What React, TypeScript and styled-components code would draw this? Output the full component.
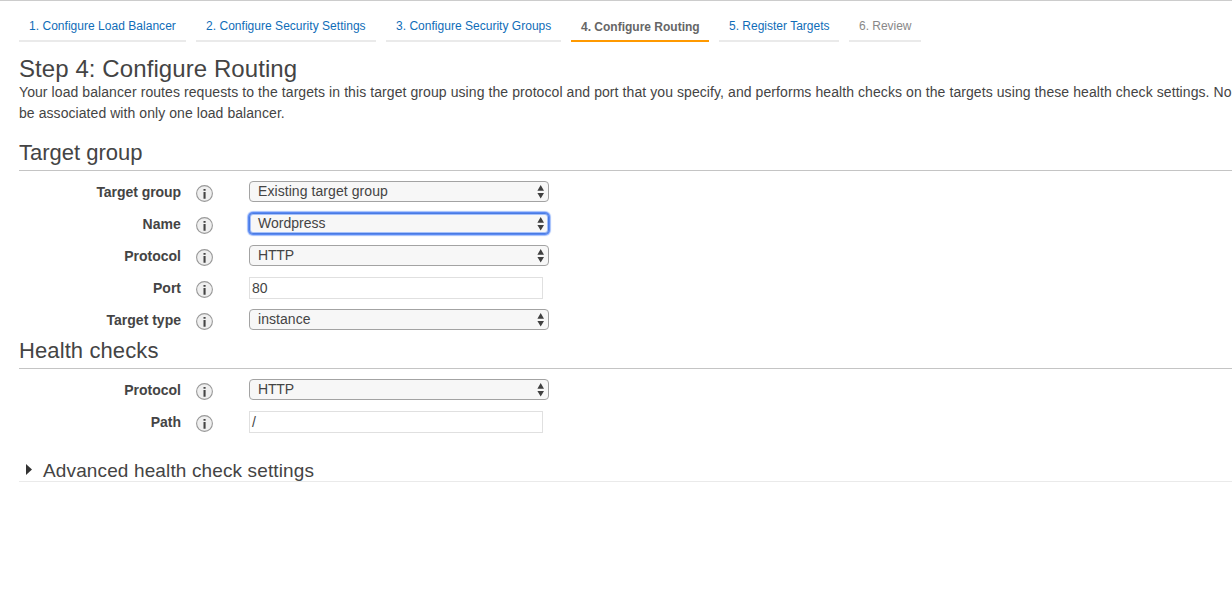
import React from 'react';
import styled, { createGlobalStyle } from 'styled-components';

const GlobalStyle = createGlobalStyle`
  * { box-sizing: border-box; }
  html, body { margin: 0; background: #fff; overflow: hidden; }
  body { font-family: "Liberation Sans", Helvetica, Arial, sans-serif; color: #444; }
`;

const Page = styled.main`
  height: 606px;
  border-top: 1px solid #ccc;
  padding-left: 19px;
  overflow: hidden;
  white-space: nowrap;
`;

const Tabs = styled.nav`
  display: flex;
  gap: 10px;
  height: 41px;
`;

type TabState = 'link' | 'active' | 'pending';
const tabColors = { link: '#0f6db8', active: '#666', pending: '#888' };

const Tab = styled.div<{ $state: TabState; $width: number; $spacing: number }>`
  width: ${(p) => p.$width}px;
  padding: ${(p) => (p.$state === 'active' ? 18 : 17)}px 0 0 10px;
  border-bottom: 2px solid ${(p) => (p.$state === 'active' ? '#f90' : '#eaeaea')};
  color: ${(p) => tabColors[p.$state]};
  font-size: 12px;
  line-height: 16px;
  font-weight: ${(p) => (p.$state === 'active' ? 700 : 400)};
  letter-spacing: ${(p) => p.$spacing}px;
`;

const Title = styled.h1`
  margin: 12px 0 0;
  font-size: 24px;
  line-height: 30px;
  font-weight: 400;
  letter-spacing: 0.08px;
`;

const Intro = styled.p`
  margin: -2px 0 0;
  font-size: 14px;
  line-height: 21px;
`;

const IntroLine = styled.span<{ $spacing: number }>`
  display: block;
  letter-spacing: ${(p) => p.$spacing}px;
`;

const SectionTitle = styled.h2<{ $top: number; $spacing: number }>`
  margin: ${(p) => p.$top}px 0 10px;
  height: 34px;
  border-bottom: 1px solid #c4c4c4;
  font-size: 22px;
  line-height: 32px;
  font-weight: 400;
  letter-spacing: ${(p) => p.$spacing}px;
`;

const Row = styled.div`
  display: grid;
  grid-template-columns: 162px 17px 1fr;
  column-gap: 15px;
  height: 32px;
  align-items: start;
`;

const Label = styled.label<{ $spacing?: number }>`
  padding-top: 2px;
  text-align: right;
  font-size: 14px;
  line-height: 18px;
  font-weight: 700;
  letter-spacing: ${(p) => p.$spacing ?? 0}px;
`;

const InfoSvg = styled.svg`
  display: block;
  margin-top: 4px;
`;

const SelectBox = styled.div<{ $focused?: boolean }>`
  display: flex;
  justify-content: space-between;
  width: 300px;
  height: 21px;
  margin-left: 21px;
  padding: 0 3px 0 8px;
  border: 1px solid ${(p) => (p.$focused ? '#4a7be0' : '#a3a3a3')};
  border-radius: 4px;
  background: #f7f7f7;
  box-shadow: ${(p) => (p.$focused ? '0 0 0 1px #5b8af5, 0 0 1px 2px #a5c0fb, inset 0 0 0 1px #a5c0fb' : 'none')};
  font-size: 14px;
  line-height: 19px;
`;

const TextBox = styled.div`
  width: 294px;
  height: 22px;
  margin-left: 21px;
  padding: 0 2px;
  border: 1px solid #e0e0e0;
  font-size: 14px;
  line-height: 21px;
`;

const Arrows = styled.svg`
  display: block;
  margin-top: 3px;
`;

const Value = styled.span<{ $spacing?: number }>`
  letter-spacing: ${(p) => p.$spacing ?? 0}px;
`;

const Advanced = styled.div`
  display: flex;
  gap: 10px;
  height: 25px;
  margin-top: 14px;
  padding-left: 7px;
  border-bottom: 1px solid #eaeaea;
  font-size: 19px;
  line-height: 27px;
  letter-spacing: 0.13px;
`;

const Caret = styled.svg`
  display: block;
  margin-top: 7px;
`;

const Info = () => (
  <InfoSvg width="17" height="17" viewBox="0 0 17 17">
    <circle cx="8.5" cy="8.5" r="7.9" fill="#efefef" stroke="#999" strokeWidth="1.1" />
    <path d="M7.5 4h2.1v1.8H7.5zM7.5 6.9h2.1v6.8H7.5z" fill="#444" />
  </InfoSvg>
);

interface FieldProps {
  label: string;
  value: string;
  kind?: 'select' | 'text';
  focused?: boolean;
  labelSpacing?: number;
  valueSpacing?: number;
}

const Field = ({ label, value, kind = 'select', focused, labelSpacing, valueSpacing }: FieldProps) => (
  <Row>
    <Label $spacing={labelSpacing}>{label}</Label>
    <Info />
    {kind === 'select' ? (
      <SelectBox $focused={focused}>
        <Value $spacing={valueSpacing}>{value}</Value>
        <Arrows width="8" height="14" viewBox="0 0 8 14">
          <path d="M3.7 0 7 5.8H0.4z M0.4 7.9H7L3.7 13.6z" fill="#404040" />
        </Arrows>
      </SelectBox>
    ) : (
      <TextBox>{value}</TextBox>
    )}
  </Row>
);

const tabs: { text: string; state: TabState; width: number; spacing: number }[] = [
  { text: '1. Configure Load Balancer', state: 'link', width: 167, spacing: 0.03 },
  { text: '2. Configure Security Settings', state: 'link', width: 180, spacing: 0.03 },
  { text: '3. Configure Security Groups', state: 'link', width: 175, spacing: 0.02 },
  { text: '4. Configure Routing', state: 'active', width: 138, spacing: 0 },
  { text: '5. Register Targets', state: 'link', width: 120, spacing: 0 },
  { text: '6. Review', state: 'pending', width: 72, spacing: -0.03 },
];

export default function App() {
  return (
    <>
      <GlobalStyle />
      <Page>
        <Tabs>
          {tabs.map((t) => (
            <Tab key={t.text} $state={t.state} $width={t.width} $spacing={t.spacing}>
              {t.text}
            </Tab>
          ))}
        </Tabs>
        <Title>Step 4: Configure Routing</Title>
        <Intro>
          <IntroLine $spacing={0.08}>
            Your load balancer routes requests to the targets in this target group using the protocol and port that you
            specify, and performs health checks on the targets using these health check settings. No
          </IntroLine>
          <IntroLine $spacing={0.065}>be associated with only one load balancer.</IntroLine>
        </Intro>
        <SectionTitle $top={13} $spacing={0}>Target group</SectionTitle>
        <Field label="Target group" value="Existing target group" labelSpacing={-0.06} valueSpacing={0.07} />
        <Field label="Name" value="Wordpress" labelSpacing={0.1} focused />
        <Field label="Protocol" value="HTTP" valueSpacing={-0.15} />
        <Field label="Port" value="80" kind="text" />
        <Field label="Target type" value="instance" valueSpacing={0.06} />
        <SectionTitle $top={-6} $spacing={0.1}>Health checks</SectionTitle>
        <Field label="Protocol" value="HTTP" valueSpacing={-0.15} />
        <Field label="Path" value="/" kind="text" />
        <Advanced>
          <Caret width="7" height="12" viewBox="0 0 7 12">
            <path d="M0 0 6 5.5 0 11z" fill="#333" />
          </Caret>
          <span>Advanced health check settings</span>
        </Advanced>
      </Page>
    </>
  );
}
